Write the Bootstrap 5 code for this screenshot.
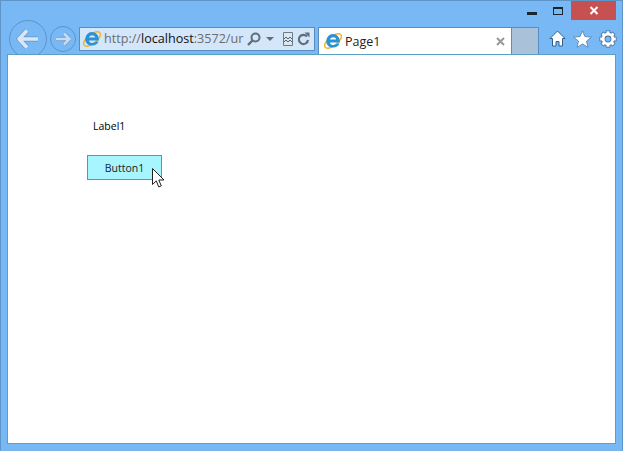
<!DOCTYPE html>
<html lang="en">
<head>
<meta charset="utf-8">
<title>Page1</title>
<link href="https://cdn.jsdelivr.net/npm/bootstrap@5.3.0/dist/css/bootstrap.min.css" rel="stylesheet">
<style>
html,body{height:451px;overflow:hidden;margin:0;background:#78b8f5;}
body{font-family:"Open Sans","Liberation Sans",sans-serif;}
.win{width:623px;height:451px;background:#78b8f5;border:1px solid #5f94c8;border-bottom-color:#7ab4ea;}
.titlerow{height:19px;padding-right:6px;}
.wbtn{width:26px;height:19px;}
.wclose{width:45px;height:19px;background:#c75050;}
.defs-holder{position:absolute;}
.toolrow{height:34px;padding-left:8px;overflow:hidden;}
.backb{width:38px;height:38px;border:1px solid #5f94c8;border-radius:50%;flex:none;}
.fwdb{width:26px;height:26px;border:1px solid #5f94c8;border-radius:50%;flex:none;margin:6px 3px 0 3px;}
.addr{width:236px;height:24px;margin-top:7px;flex:none;background:#d3e6fa;border:1px solid #5a8cbd;padding-left:3px;}
.addrico{margin-right:3px;flex:none;}
.addrtext{width:139px;flex:none;font-size:12.6px;line-height:22px;color:#6d6d6d;white-space:nowrap;}
.addrtext b{font-weight:400;color:#111;}
.gopad{margin-left:4px;}
.dropc{margin-left:5px;}
.compat{margin-left:9px;}
.refr{margin-left:4px;}
.tabx{width:194px;height:27px;margin:7px 0 0 3px;flex:none;background:#fff;border:1px solid #5a8cbd;border-bottom:0;padding:0 6px 0 5px;font-size:12.5px;color:#222;}
.tabx span{flex:1;margin-left:3px;line-height:26px;padding-top:1px;}
.tabnew{width:27px;height:27px;margin-top:7px;background:#a9c2d9;border:1px solid #5a8cbd;border-left:0;border-bottom:0;flex:none;}
.tools{margin-left:10px;margin-top:10px;gap:7px;}
.pagearea{width:609px;height:390px;margin-left:6px;background:#fff;border:1px solid #58a0c4;position:relative;padding:62px 0 0 79px;}
.lbl{font-size:10.5px;line-height:18px;height:18px;margin-left:6px;color:#000;}
.pgbtn{display:block;width:75px;height:25px;margin-top:20px;padding:0;background:#a6f5ff;border:1px solid #35a3d0;border-radius:0;font-size:10.5px;color:#222;font-family:inherit;line-height:22px;}
.cursor{position:absolute;left:144px;top:113px;}
</style>
</head>
<body>
<svg width="0" height="0" class="defs-holder"><defs>
<g id="ie">
<ellipse cx="9" cy="9" rx="10" ry="4.6" transform="rotate(-38 9 9)" fill="none" stroke="#efb52e" stroke-width="1.5"/>
<path d="M2.2 9a6.8 6.8 0 0 1 13.6-.2v1.6H6c.4 3.2 5 3.4 6.8 1.2h2.8C13.4 17.6 2.2 17 2.2 9zM6 7.6h6.2c-.4-3-5.7-3-6.2 0z" fill="#2a92d6" fill-rule="evenodd"/>
</g>
</defs></svg>
<div class="win">
  <div class="titlerow d-flex justify-content-end align-items-center">
    <div class="wbtn d-flex align-items-center justify-content-center">
      <svg width="10" height="8" viewBox="0 0 10 8"><rect y="5" width="10" height="3" fill="#1a2530"/></svg>
    </div>
    <div class="wbtn d-flex align-items-center justify-content-center">
      <svg width="10" height="8" viewBox="0 0 10 8"><rect x=".5" y=".5" width="9" height="7" fill="none" stroke="#1a2530"/><rect width="10" height="2" fill="#1a2530"/></svg>
    </div>
    <div class="wclose d-flex align-items-center justify-content-center">
      <svg width="10" height="9" viewBox="0 0 10 9"><path d="M1.5 1l7 7M8.5 1l-7 7" stroke="#fff" stroke-width="2"/></svg>
    </div>
  </div>
  <div class="toolrow d-flex">
    <div class="backb d-flex align-items-center justify-content-center">
      <svg width="24" height="22" viewBox="0 0 24 22"><path d="M11 2.5L3 11l8 8.5M3.5 11H22" fill="none" stroke="#6f9cc8" stroke-width="5.4" stroke-linejoin="round"/><path d="M11 2.5L3 11l8 8.5M3.5 11H22" fill="none" stroke="#d6e7f9" stroke-width="3.6" stroke-linejoin="round"/></svg>
    </div>
    <div class="fwdb d-flex align-items-center justify-content-center">
      <svg width="16" height="14" viewBox="0 0 16 14"><path d="M9 1.500l5.500 5.500L9 12.500M14 7H1" fill="none" stroke="#6f9cc8" stroke-width="4"/><path d="M9 1.500l5.500 5.500L9 12.500M14 7H1" fill="none" stroke="#c4dcf5" stroke-width="2.600"/></svg>
    </div>
    <div class="addr d-flex align-items-center">
      <svg width="18" height="18" viewBox="0 0 18 18" class="addrico"><use href="#ie"/></svg>
      <div class="addrtext">http://<b>localhost</b>:3572/ur</div>
      <svg width="14" height="14" viewBox="0 0 14 14" class="gopad"><circle cx="8.500" cy="5.500" r="4" fill="none" stroke="#5f6f7c" stroke-width="2"/><path d="M5.500 8.500L1 13" stroke="#5f6f7c" stroke-width="2.400"/></svg>
      <svg width="8" height="4" viewBox="0 0 8 4" class="dropc"><path d="M0 0h8L4 4z" fill="#5f6f7c"/></svg>
      <svg width="10" height="14" viewBox="0 0 10 14" class="compat"><path d="M.5.5h9v13h-9z" fill="#dbe6f0" stroke="#6b7a86"/><path d="M1 7l2-2 2 2 2-2 2 2M1 10l2-2 2 2 2-2 2 2" fill="none" stroke="#55636f"/></svg>
      <svg width="13" height="14" viewBox="0 0 13 14" class="refr"><path d="M10 4.500A4.600 4.600 0 1 0 11 8" fill="none" stroke="#5f6f7c" stroke-width="2.200"/><path d="M7.500 .5h5v5z" fill="#5f6f7c"/></svg>
    </div>
    <div class="tabx d-flex align-items-center">
      <svg width="18" height="18" viewBox="0 0 18 18"><use href="#ie"/></svg>
      <span>Page1</span>
      <svg width="9" height="9" viewBox="0 0 9 9"><path d="M1 1l7 7M8 1l-7 7" stroke="#999" stroke-width="2"/></svg>
    </div>
    <div class="tabnew"></div>
    <div class="tools d-flex align-items-start">
      <svg width="17" height="17" viewBox="0 0 17 17"><path d="M8.500 1L1 8.500h2.500v7.500h3.500v-4.500h3V16h3.500V8.500H16z" fill="#fff" stroke="#2f5f8c"/></svg>
      <svg width="19" height="18" viewBox="0 0 20 18"><path d="M10 .5l2.600 6 6.700.5-5.100 4.300 1.600 6.400-5.800-3.500-5.800 3.500 1.600-6.400L.7 7l6.700-.5z" fill="#fff" stroke="#4d7aa6" stroke-width=".8"/></svg>
      <svg width="18" height="18" viewBox="0 0 18 18"><path d="M9 .5v4M9 13.500v4M.5 9h4M13.500 9h4M3 3l2.500 2.500M12.500 12.500L15 15M15 3l-2.500 2.500M5.500 12.500L3 15" stroke="#3f6a94" stroke-width="4.400"/><circle cx="9" cy="9" r="4.800" fill="none" stroke="#3f6a94" stroke-width="4.400"/><path d="M9 1.200v3M9 13.800v3M1.200 9h3M13.800 9h3M3.500 3.500l2.100 2.100M12.400 12.400l2.100 2.100M14.500 3.500l-2.100 2.100M5.600 12.400l-2.100 2.100" stroke="#fff" stroke-width="3"/><circle cx="9" cy="9" r="4.800" fill="none" stroke="#fff" stroke-width="2.800"/></svg>
    </div>
  </div>
  <div class="pagearea">
    <div class="lbl">Label1</div>
    <button type="button" class="pgbtn">Button1</button>
    <svg class="cursor" width="13" height="21" viewBox="0 0 13 21"><path d="M.5.5v16l3.800-3.600 2.400 6 2.600-1-2.500-5.900h5.200z" fill="#fff" stroke="#222" stroke-linejoin="round"/></svg>
  </div>
</div>
</body>
</html>
